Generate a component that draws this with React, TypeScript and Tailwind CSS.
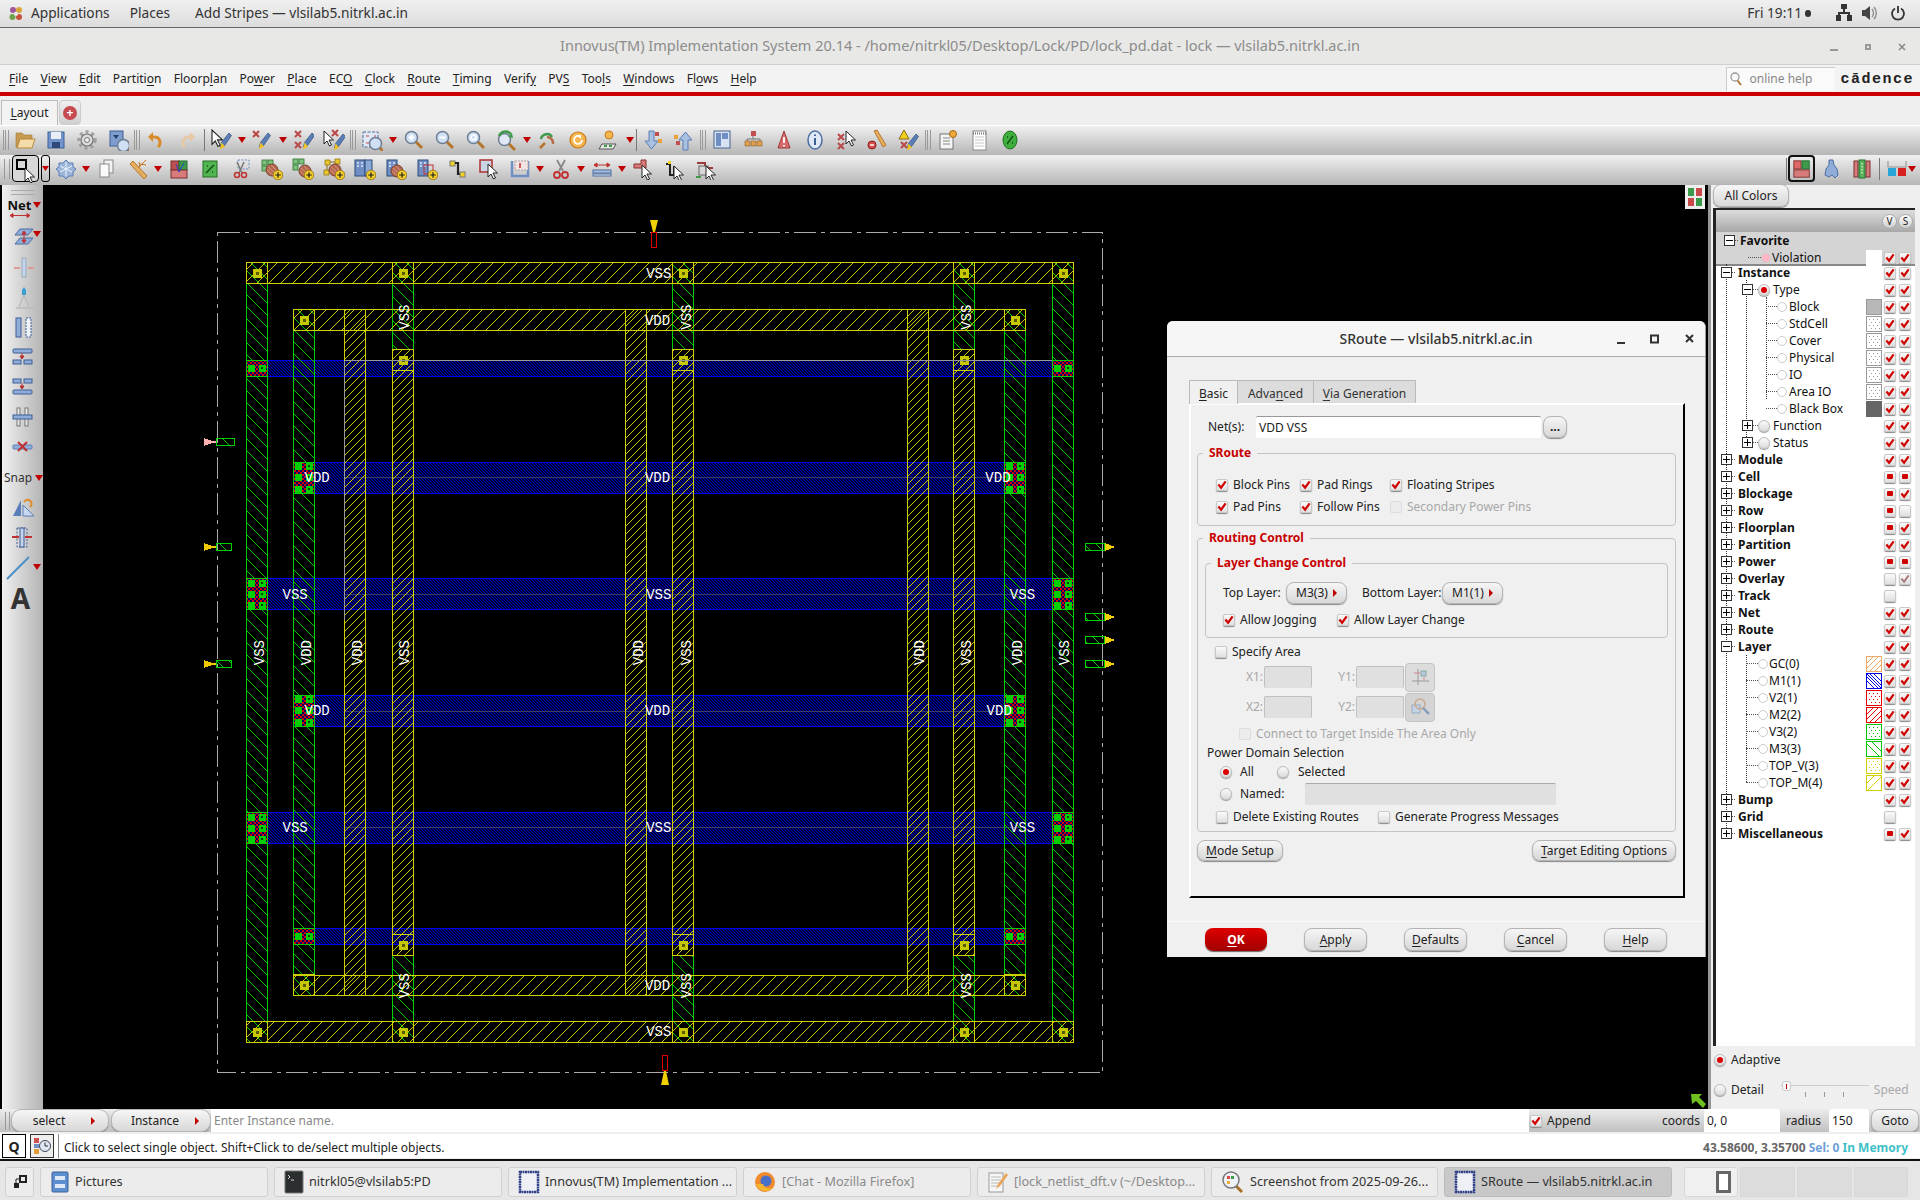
import React from "react";

// ---------- small icon parts ----------
const Cur = ({ x = 0, y = 0, s = 1 }: { x?: number; y?: number; s?: number }) => (
  <path transform={`translate(${x} ${y}) scale(${s})`} d="M0 0v13l3-3 2.5 5 2-1L5 9h4.5z" fill="#fff" stroke="#222" strokeWidth="1" />
);
const Pen = ({ x = 0, y = 0 }: { x?: number; y?: number }) => (
  <g transform={`translate(${x} ${y})`}>
    <path d="M11 0l2.5 2.5-7 10-4 1.5 1-4.500z" fill="#5a7fb8" stroke="#2f4a78" strokeWidth=".7" />
    <path d="M3.500 9.500l-1.500 7 5-3z" fill="#f0c21c" />
  </g>
);
const X = ({ x = 0, y = 0 }: { x?: number; y?: number }) => (
  <path transform={`translate(${x} ${y})`} d="M0 0l6 6M6 0L0 6" stroke="#b84a4a" strokeWidth="2" fill="none" />
);
const Mag = ({ x = 0, y = 0, c = "#cfe0f5" }: { x?: number; y?: number; c?: string }) => (
  <g transform={`translate(${x} ${y})`}>
    <path d="M10 10l7 7" stroke="#b5762c" strokeWidth="3" />
    <circle cx="6.500" cy="6.500" r="6" fill={c} stroke="#6d7d92" strokeWidth="1.500" />
  </g>
);
const Plus = ({ x = 0, y = 0 }: { x?: number; y?: number }) => (
  <g transform={`translate(${x} ${y})`}>
    <circle cx="5" cy="5" r="4.800" fill="#f4cf2c" stroke="#8a6a10" strokeWidth=".8" />
    <path d="M5 2.200v5.600M2.200 5h5.600" stroke="#222" strokeWidth="1.200" />
  </g>
);
const Grn = ({ x = 0, y = 0 }: { x?: number; y?: number }) => (
  <g transform={`translate(${x} ${y})`} fill="#7cc47c" stroke="#2f6f2f" strokeWidth=".8">
    <rect x="0" y="0" width="5" height="5" />
    <rect x="6" y="0" width="5" height="5" />
    <rect x="0" y="6" width="5" height="5" />
  </g>
);
const Blu = ({ x = 0, y = 0 }: { x?: number; y?: number }) => (
  <g transform={`translate(${x} ${y})`}>
    <rect width="10" height="16" fill="#6f8fc4" stroke="#2f4a78" />
    <path d="M2 3h2M6 3h2M2 6h2M6 6h2" stroke="#dfe8f6" strokeWidth="1.500" />
  </g>
);
const Ball = ({ x = 0, y = 0 }: { x?: number; y?: number }) => (
  <g transform={`translate(${x} ${y})`}>
    <circle cx="6" cy="6" r="6" fill="#b5684f" stroke="#7a3f2c" />
    <path d="M2 3l8 7M1 6l6 5M5 1l6 6" stroke="#e0a58f" strokeWidth=".8" />
  </g>
);

const ic: Record<string, React.ReactNode> = {
  folder: (
    <>
      <path d="M2 4h6l2 2h8v4H6l-3 8H2z" fill="#c79c52" stroke="#a37a35" strokeWidth=".6" />
      <path d="M6 10h15l-3 9H3z" fill="#f4dba8" stroke="#b98a3e" />
    </>
  ),
  save: (
    <>
      <rect x="3" y="3" width="16" height="16" fill="#7195cb" stroke="#3e5f95" />
      <rect x="6" y="3" width="10" height="7" fill="#e8eef6" />
      <rect x="7" y="13" width="8" height="6" fill="#2f4a78" />
    </>
  ),
  gear: (
    <>
      <circle cx="11" cy="11" r="8" fill="none" stroke="#a0a0a0" strokeWidth="3.500" strokeDasharray="3 3" />
      <circle cx="11" cy="11" r="6" fill="#dcdcdc" stroke="#777" strokeWidth="1.200" />
      <circle cx="11" cy="11" r="2.500" fill="#efefef" stroke="#777" />
    </>
  ),
  props: (
    <>
      <rect x="3" y="2" width="13" height="15" fill="#7f9dcd" stroke="#3e5f95" />
      <path d="M6 6l3 4 3-4z" fill="#24406f" />
      <Mag x={10} y={10} />
    </>
  ),
  undo: (
    <>
      <path d="M13 18c4-4 2-10-4-10H7" stroke="#d98c2e" strokeWidth="3" fill="none" />
      <path d="M8 3L3 8l5 5z" fill="#d98c2e" />
    </>
  ),
  redo: (
    <>
      <path d="M9 18c-4-4-2-10 4-10h2" stroke="#e6c7a6" strokeWidth="3" fill="none" />
      <path d="M14 3l5 5-5 5z" fill="#e6c7a6" />
    </>
  ),
  selpen: (
    <>
      <Cur x={2} y={1} s={1.100} />
      <Pen x={8} y={4} />
    </>
  ),
  xpen: (
    <>
      <X x={2} y={2} />
      <Pen x={6} y={4} />
    </>
  ),
  xxpen: (
    <>
      <X x={3} y={2} />
      <X x={3} y={13} />
      <Pen x={9} y={4} />
    </>
  ),
  curxpen: (
    <>
      <Cur x={1} y={2} />
      <X x={9} y={1} />
      <Pen x={9} y={5} />
    </>
  ),
  zoomsel: (
    <>
      <rect x="2" y="3" width="15" height="15" fill="#dfe8f4" stroke="#4d6d9e" strokeDasharray="3 1.500" />
      <path d="M5 7h3M13 7h2M5 14h3" stroke="#c05050" />
      <Mag x={8} y={8} />
    </>
  ),
  zin: (
    <>
      <Mag x={3} y={2} />
      <path d="M9.500 5.500v6M6.500 8.500h6" stroke="#fff" strokeWidth="2" />
    </>
  ),
  zout: (
    <>
      <Mag x={3} y={2} />
      <path d="M6.500 8.500h6" stroke="#fff" strokeWidth="2" />
    </>
  ),
  zfit: (
    <>
      <Mag x={3} y={2} />
      <circle cx="9.500" cy="8.500" r="2.500" fill="none" stroke="#fff" strokeWidth="1.500" />
    </>
  ),
  zback: (
    <>
      <Mag x={3} y={4} c="#dfe8f4" />
      <path d="M4 7c2-5 8-6 12-2" stroke="#3e9a4a" strokeWidth="2.500" fill="none" />
      <path d="M18 9l-5-1 4-4z" fill="#3e9a4a" />
    </>
  ),
  zfwd: (
    <>
      <path d="M5 10a6 6 0 0 1 11-2" stroke="#3e9a4a" strokeWidth="2.500" fill="none" />
      <path d="M11 8a6 6 0 0 1 6 7" stroke="#b56a4a" strokeWidth="2.500" fill="none" />
      <path d="M9 14l-5 5" stroke="#b5762c" strokeWidth="2.500" />
    </>
  ),
  refresh: (
    <>
      <circle cx="11" cy="11" r="8" fill="#f4b64e" stroke="#c9791c" strokeWidth="1.200" />
      <path d="M15 11a4 4 0 1 1-2-3.500" stroke="#fff" strokeWidth="1.800" fill="none" />
      <path d="M9 6h5v4z" fill="#fff" />
    </>
  ),
  chip: (
    <>
      <circle cx="11" cy="6" r="4" fill="#f4b64e" stroke="#c9791c" />
      <path d="M4 15h14l-3 5H1z" fill="#e8e8e8" stroke="#555" />
      <path d="M6 16h3v2H6zM11 16h3v2h-3z" fill="#3e9a4a" />
    </>
  ),
  down: (
    <>
      <path d="M7 2h5v10h4l-6.500 8L3 12h4z" fill="#a9c0e0" stroke="#5a7fb8" />
      <rect x="13" y="3" width="4" height="4" fill="#c05050" />
      <rect x="16" y="10" width="4" height="4" fill="#e9a03a" />
    </>
  ),
  up: (
    <>
      <path d="M10 21h5V11h4l-6.500-8L6 11h4z" fill="#a9c0e0" stroke="#5a7fb8" />
      <rect x="1" y="6" width="4" height="4" fill="#e9a03a" />
      <rect x="3" y="12" width="4" height="4" fill="#c05050" />
    </>
  ),
  layout: (
    <>
      <rect x="3" y="2" width="16" height="17" fill="#d8e2f2" stroke="#46648f" />
      <rect x="5" y="4" width="5" height="13" fill="#6f8fc4" />
      <rect x="11" y="4" width="6" height="6" fill="#6f8fc4" />
    </>
  ),
  hier: (
    <>
      <rect x="9" y="2" width="5" height="5" fill="#c05050" />
      <path d="M11 7v3M5 12v-2h13v2" stroke="#777" fill="none" />
      <path d="M3 12h5v5H3zM9 12h5v5H9zM15 12h5v5h-5z" fill="#e0a04e" stroke="#8a6030" strokeWidth=".6" />
    </>
  ),
  warn: (
    <>
      <path d="M11 2l6 17H5z" fill="#d96a6a" stroke="#a03a3a" />
      <path d="M11 8v6M11 16v1.500" stroke="#fff" strokeWidth="1.800" />
    </>
  ),
  info: (
    <>
      <ellipse cx="11" cy="11" rx="7" ry="9" fill="#dfe8f6" stroke="#4d6d9e" strokeWidth="1.500" />
      <path d="M11 9v7M11 5.500v1.500" stroke="#3e5f95" strokeWidth="2" />
    </>
  ),
  xcur: (
    <>
      <X x={3} y={5} />
      <X x={3} y={14} />
      <Cur x={11} y={2} />
    </>
  ),
  rstop: (
    <>
      <path d="M8 2l3-1 9 15-3 2z" fill="#e5ad5e" stroke="#b3772c" />
      <circle cx="6" cy="16" r="4" fill="#d64a4a" stroke="#8a2020" />
      <path d="M4 16h4" stroke="#fff" strokeWidth="1.500" />
    </>
  ),
  wpen: (
    <>
      <path d="M7 1l5 9H2z" fill="#f2d31c" stroke="#8a6a10" />
      <Pen x={8} y={5} />
      <X x={4} y={13} />
    </>
  ),
  notes: (
    <>
      <rect x="3" y="5" width="13" height="15" fill="#f4f4f4" stroke="#777" />
      <path d="M6 9h7M6 12h7M6 15h7" stroke="#888" />
      <circle cx="16" cy="5" r="3.500" fill="#f0a838" stroke="#a56a14" />
    </>
  ),
  pad: (
    <>
      <rect x="5" y="2" width="13" height="19" fill="#fdfdfd" stroke="#888" />
      <path d="M5 4.500h13" stroke="#777" strokeWidth="2" strokeDasharray="1 1" />
      <path d="M7 8h9M7 11h9M7 14h9M7 17h9" stroke="#c8c8c8" />
    </>
  ),
  gball: (
    <>
      <ellipse cx="11" cy="11" rx="7" ry="9" fill="#3fae3f" stroke="#1f6f1f" />
      <path d="M8 15l6-8M8 8h1M13 14h1" stroke="#0f4f0f" strokeWidth="1.300" />
    </>
  ),
  snow: (
    <>
      <path d="M11 2l3 3 4 0 0 4 3 2-3 3v4h-4l-3 3-3-3H4v-4l-3-3 3-2V5h4z" fill="#9bb6d8" stroke="#5a7fb8" />
      <path d="M11 4v14M5 8l12 6M17 8L5 14" stroke="#eef3fa" />
    </>
  ),
  copy: (
    <>
      <rect x="8" y="2" width="9" height="13" fill="#f2f2f2" stroke="#888" />
      <rect x="4" y="6" width="9" height="13" fill="#fafafa" stroke="#888" />
    </>
  ),
  ruler: (
    <>
      <path d="M3 6l3-3 14 15-3 3z" fill="#e5ad5e" stroke="#b3772c" />
      <path d="M11 10l8-8M13 6l6 1M12 4l1 5" stroke="#c9791c" />
    </>
  ),
  chart: (
    <>
      <rect x="3" y="3" width="8" height="9" fill="#c05050" stroke="#7a2f2f" />
      <rect x="11" y="3" width="8" height="9" fill="#3e9a4a" stroke="#1f6f2f" />
      <rect x="3" y="12" width="16" height="8" fill="#d67a7a" stroke="#7a2f2f" />
      <path d="M8 6l3 8 5-9" stroke="#2040d0" fill="none" />
    </>
  ),
  pct: (
    <>
      <rect x="4" y="3" width="14" height="16" fill="#52b552" stroke="#256f25" />
      <path d="M7 15l8-8M8 8h1M13 14h1" stroke="#0f4f0f" strokeWidth="1.500" />
    </>
  ),
  scis: (
    <>
      <rect x="8" y="2" width="11" height="9" fill="none" stroke="#6f8fc4" strokeDasharray="2 1.500" />
      <path d="M7 4l5 11M14 4l-5 11" stroke="#777" strokeWidth="1.500" />
      <circle cx="7" cy="17" r="2.500" fill="none" stroke="#c03030" strokeWidth="1.500" />
      <circle cx="14" cy="17" r="2.500" fill="none" stroke="#c03030" strokeWidth="1.500" />
    </>
  ),
  gridball: (
    <>
      <Grn x={1} y={2} />
      <Ball x={5} y={6} />
      <Plus x={12} y={12} />
    </>
  ),
  gridball2: (
    <>
      <Grn x={1} y={1} />
      <Ball x={7} y={7} />
      <Plus x={12} y={12} />
    </>
  ),
  yellball: (
    <>
      <path d="M2 2h5v5H2zM12 1h5v5h-5zM1 12h5v5H1z" fill="#e8c82c" stroke="#8a6a10" strokeWidth=".7" />
      <path d="M7 4h5M4 7v5" stroke="#8a6a10" />
      <Ball x={6} y={6} />
      <Plus x={12} y={12} />
    </>
  ),
  bluebar: (
    <>
      <Blu x={1} y={2} />
      <rect x="11" y="2" width="7" height="16" fill="#8ba9d6" stroke="#2f4a78" />
      <Plus x={12} y={12} />
    </>
  ),
  blueball: (
    <>
      <Blu x={2} y={2} />
      <Ball x={6} y={7} />
      <Plus x={12} y={12} />
    </>
  ),
  bluered: (
    <>
      <Blu x={2} y={2} />
      <rect x="8" y="7" width="9" height="9" fill="none" stroke="#c03030" />
      <Plus x={12} y={12} />
    </>
  ),
  wire: (
    <>
      <rect x="3" y="3" width="5" height="5" fill="#f0d020" stroke="#777" />
      <path d="M8 5h3v11h3" stroke="#222" strokeWidth="2.200" fill="none" />
      <rect x="13" y="14" width="5" height="5" fill="#f0d020" stroke="#777" />
    </>
  ),
  boxcur: (
    <>
      <rect x="2" y="2" width="12" height="12" fill="#c9d4e6" stroke="#b03030" strokeWidth="1.500" />
      <Cur x={10} y={6} />
    </>
  ),
  tray: (
    <>
      <path d="M3 3v15h16V3" fill="none" stroke="#6f8fc4" strokeWidth="2.500" />
      <path d="M6 3h13v9H6z" fill="#f3e4e4" stroke="#b0a0a0" strokeDasharray="2 1" />
      <path d="M11 5v5" stroke="#c03030" strokeWidth="1.500" />
    </>
  ),
  scissor: (
    <>
      <path d="M7 2l6 11M15 2L9 13" stroke="#888" strokeWidth="1.800" />
      <circle cx="7" cy="17" r="3" fill="none" stroke="#c03030" strokeWidth="1.800" />
      <circle cx="15" cy="17" r="3" fill="none" stroke="#c03030" strokeWidth="1.800" />
    </>
  ),
  stretch: (
    <>
      <path d="M3 7h16M3 7l3-2v4zM19 7l-3-2v4z" stroke="#c03030" fill="#c03030" />
      <rect x="2" y="12" width="18" height="3" fill="#a9c0e0" stroke="#4d6d9e" />
      <rect x="2" y="16" width="18" height="2" fill="#dfe8f4" stroke="#4d6d9e" />
    </>
  ),
  redcur: (
    <>
      <path d="M9 2h5v8H2V6h7z" fill="#d97a7a" stroke="#8a3030" />
      <Cur x={10} y={7} />
    </>
  ),
  step: (
    <>
      <path d="M3 6h4v11h4V8" stroke="#222" strokeWidth="2" fill="none" />
      <rect x="5" y="3" width="3" height="3" fill="#f0d020" />
      <Cur x={11} y={8} />
    </>
  ),
  redstep: (
    <>
      <path d="M3 5h8v5h8" stroke="#9a3a3a" strokeWidth="2" fill="none" />
      <rect x="5" y="8" width="9" height="9" fill="#d8d8d8" stroke="#666" />
      <Cur x={12} y={8} />
      <path d="M2 19h5" stroke="#3e9a4a" strokeWidth="2" />
    </>
  ),
  panelc: (
    <>
      <rect x="2" y="2" width="8" height="9" fill="#d66" stroke="#7a2f2f" />
      <rect x="11" y="2" width="8" height="9" fill="#3e9a4a" stroke="#1f6f2f" />
      <rect x="2" y="12" width="17" height="8" fill="#d67a7a" stroke="#7a2f2f" />
    </>
  ),
  puzzle: <path d="M9 2h4l1 5 3 4 1 6-3 3-3-3-3 2-4-2 1-6 3-4z" fill="#8fadd8" stroke="#4d6d9e" />,
  greenbar: (
    <>
      <rect x="3" y="3" width="4" height="16" fill="#d67a7a" stroke="#7a2f2f" />
      <rect x="8" y="2" width="6" height="18" fill="#5ab55a" stroke="#1f6f2f" />
      <path d="M11 5v12" stroke="#fff" strokeDasharray="1.500 1.500" />
      <rect x="15" y="3" width="4" height="16" fill="#d67a7a" stroke="#7a2f2f" />
    </>
  ),
  bridge: (
    <>
      <path d="M2 3v6h18V3" fill="none" stroke="#aaa" strokeWidth="1.500" />
      <rect x="2" y="10" width="8" height="8" fill="#27a5d8" />
      <rect x="12" y="10" width="8" height="8" fill="#d62020" />
    </>
  ),
};

const Ico = ({ n, s = 22 }: { n: string; s?: number }) => (
  <svg width={s} height={s} viewBox="0 0 22 22">
    {ic[n]}
  </svg>
);

const Tri = () => (
  <svg width="10" height="6" viewBox="0 0 10 6" className="shrink-0">
    <path d="M1 0h8L5 6z" fill="#c00000" />
  </svg>
);

const T = ({ n }: { n: string }) => (
  <div className="w-[31px] flex items-center justify-center shrink-0">
    <Ico n={n} />
  </div>
);

const Handle = () => (
  <div className="w-[6px] h-[20px] mr-[1px] shrink-0 border-x border-[#999] relative">
    <div className="w-[1px] h-full bg-[#999] mx-auto" />
  </div>
);

const Sp = ({ w }: { w: number }) => <div className="shrink-0" style={{ width: w }} />;
const VSep = () => <div className="w-[1px] h-[22px] bg-[#777] shrink-0 mx-[1px]" />;

// ---------- menu ----------
const M = ({ t, u = 0, className = "" }: { t: string; u?: number; className?: string }) => (
  <span className={className}>
    {t.slice(0, u)}
    <span className="underline underline-offset-2">{t[u]}</span>
    {t.slice(u + 1)}
  </span>
);

const menus: [string, number][] = [
  ["File", 0],
  ["View", 0],
  ["Edit", 0],
  ["Partition", 7],
  ["Floorplan", 6],
  ["Power", 2],
  ["Place", 0],
  ["ECO", 2],
  ["Clock", 0],
  ["Route", 0],
  ["Timing", 0],
  ["Verify", 5],
  ["PVS", 2],
  ["Tools", 3],
  ["Windows", 0],
  ["Flows", 2],
  ["Help", 0],
];

// ---------- form bits ----------
const Chk = ({ st = "o" }: { st?: string }) => {
  const dis = st === "n";
  return (
    <span
      className={`inline-flex w-[12px] h-[12px] shrink-0 items-center justify-center rounded-[2px] border ${
        dis ? "border-[#ddd] bg-[#ececec]" : "border-[#c8c8c8] bg-linear-to-b from-[#fafafa] to-[#e0e0e0] shadow-[0_1px_1px_#888]"
      }`}
    >
      {st === "x" && (
        <svg width="11" height="10" viewBox="0 0 11 10">
          <path d="M1.500 4.500l3 3.500 5-7" stroke="#d00000" strokeWidth="2.400" fill="none" />
        </svg>
      )}
      {st === "g" && (
        <svg width="11" height="10" viewBox="0 0 11 10">
          <path d="M1.500 4.500l3 3.500 5-7" stroke="#a87878" strokeWidth="2" fill="none" />
        </svg>
      )}
      {st === "d" && <span className="w-[6px] h-[5px] bg-[#d00000] rounded-[1px]" />}
    </span>
  );
};

const Radio = ({ on = false, s = 12 }: { on?: boolean; s?: number }) => (
  <span
    className="inline-flex shrink-0 items-center justify-center rounded-full border border-[#bbb] bg-linear-to-b from-[#fafafa] to-[#dcdcdc] shadow-[0_1px_1px_#999]"
    style={{ width: s, height: s }}
  >
    {on && <span className="w-[6px] h-[6px] rounded-full bg-[#d80000]" />}
  </span>
);

const CL = ({ st, t, w, dim }: { st: string; t: string; w?: number; dim?: boolean }) => (
  <div className="flex items-center gap-[5px] shrink-0" style={w ? { width: w } : undefined}>
    <Chk st={st} />
    <span className={dim ? "text-[#a8a8a8]" : ""}>{t}</span>
  </div>
);

const btn = "flex items-center justify-center rounded-[8px] border border-[#b4b4b4] bg-linear-to-b from-[#f6f6f6] to-[#d8d8d8] shadow-[0_1px_1px_#888] shrink-0";

const Group = ({ t, className, children }: { t: string; className: string; children: React.ReactNode }) => (
  <div className={`relative border border-[#c4c4c4] rounded-[4px] ${className}`}>
    <span className="absolute -top-[10px] left-[5px] px-[6px] bg-[#f0f0f0] text-[#c80000] font-bold leading-[18px]">{t}</span>
    {children}
  </div>
);

const AreaField = () => <div className="w-[48px] h-[22px] bg-[#e0e0e0] border-t border-x border-[#c0c0c0] border-b-white rounded-[2px]" />;

// ---------- design tree ----------
type R = { t: string; k: string; e?: string; on?: boolean; sw?: React.ReactNode; v?: string; s?: string };

const Sw = ({ c, d, bg = "#fff", crisp }: { c: string; d: string; bg?: string; crisp?: boolean }) => (
  <svg width="16" height="16" viewBox="0 0 16 16" className="block">
    <rect x=".5" y=".5" width="15" height="15" fill={bg} stroke={c} />
    <path d={d} stroke={c} fill="none" shapeRendering={crisp ? "crispEdges" : undefined} />
  </svg>
);
const dots = "M3 3.500h1M7 3.500h1M11 3.500h1M5 6.500h1M9 6.500h1M13 6.500h1M3 9.500h1M7 9.500h1M11 9.500h1M5 12.500h1M9 12.500h1M13 12.500h1";
const fwd = "M1 7l6-6M1 12l11-11M4 15L15 4M9 15l6-6";
const back = "M1 4l11 11M1 1l14 14M4 1l11 11M8 1l7 7M1 8l7 7";
const one = "M1 3l12 12M6 1l9 9";
const oneF = "M2 15L15 2M1 8l7-7";
const gd = <Sw c="#999" d={dots} crisp />;

const rows: R[] = [
  { t: "Favorite", k: "fav", e: "-" },
  { t: "Violation", k: "vio", sw: <div className="w-[16px] h-[16px] bg-white" />, v: "x", s: "x" },
  { t: "Instance", k: "root", e: "-", v: "x", s: "x" },
  { t: "Type", k: "sub", e: "-", on: true, v: "x", s: "x" },
  { t: "Block", k: "leaf", sw: <Sw c="#999" bg="#b8b8b8" d="" />, v: "x", s: "x" },
  { t: "StdCell", k: "leaf", sw: gd, v: "x", s: "x" },
  { t: "Cover", k: "leaf", sw: gd, v: "x", s: "x" },
  { t: "Physical", k: "leaf", sw: gd, v: "x", s: "x" },
  { t: "IO", k: "leaf", sw: gd, v: "x", s: "x" },
  { t: "Area IO", k: "leaf", sw: gd, v: "x", s: "x" },
  { t: "Black Box", k: "leaf", sw: <div className="w-[16px] h-[16px] bg-[#666]" />, v: "x", s: "x" },
  { t: "Function", k: "sub", e: "+", v: "x", s: "x" },
  { t: "Status", k: "sub", e: "+", v: "x", s: "x" },
  { t: "Module", k: "root", e: "+", v: "x", s: "x" },
  { t: "Cell", k: "root", e: "+", v: "d", s: "d" },
  { t: "Blockage", k: "root", e: "+", v: "d", s: "x" },
  { t: "Row", k: "root", e: "+", v: "d", s: "o" },
  { t: "Floorplan", k: "root", e: "+", v: "d", s: "x" },
  { t: "Partition", k: "root", e: "+", v: "x", s: "x" },
  { t: "Power", k: "root", e: "+", v: "d", s: "d" },
  { t: "Overlay", k: "root", e: "+", v: "o", s: "g" },
  { t: "Track", k: "root", e: "+", v: "o" },
  { t: "Net", k: "root", e: "+", v: "x", s: "x" },
  { t: "Route", k: "root", e: "+", v: "x", s: "x" },
  { t: "Layer", k: "root", e: "-", v: "x", s: "x" },
  { t: "GC(0)", k: "layer", sw: <Sw c="#f0a868" d={fwd} />, v: "x", s: "x" },
  { t: "M1(1)", k: "layer", sw: <Sw c="#0000e0" d={back} />, v: "x", s: "x" },
  { t: "V2(1)", k: "layer", sw: <Sw c="#e80000" d={dots} crisp />, v: "x", s: "x" },
  { t: "M2(2)", k: "layer", sw: <Sw c="#e80000" d={fwd} />, v: "x", s: "x" },
  { t: "V3(2)", k: "layer", sw: <Sw c="#00c800" d={dots} crisp />, v: "x", s: "x" },
  { t: "M3(3)", k: "layer", sw: <Sw c="#00c800" d={one} />, v: "x", s: "x" },
  { t: "TOP_V(3)", k: "layer", sw: <Sw c="#d0d000" d={dots} crisp />, v: "x", s: "x" },
  { t: "TOP_M(4)", k: "layer", sw: <Sw c="#d0d000" d={oneF} />, v: "x", s: "x" },
  { t: "Bump", k: "root", e: "+", v: "x", s: "x" },
  { t: "Grid", k: "root", e: "+", v: "o" },
  { t: "Miscellaneous", k: "root", e: "+", v: "d", s: "x" },
];

const Exp = ({ e }: { e: string }) => (
  <span className="relative w-[11px] h-[11px] shrink-0 border border-[#333] bg-white">
    <span className="absolute left-[1px] right-[1px] top-[4px] h-[1px] bg-black" />
    {e === "+" && <span className="absolute top-[1px] bottom-[1px] left-[4px] w-[1px] bg-black" />}
  </span>
);
const HL = ({ w }: { w: number }) => <span className="border-t border-dotted border-[#555] shrink-0" style={{ width: w }} />;
const Faint = ({ c = "#fff" }: { c?: string }) => (
  <span className="w-[10px] h-[10px] rounded-full border border-[#ccc] shrink-0" style={{ background: c }} />
);

const TreeRow = ({ r }: { r: R }) => (
  <div className={`flex items-center h-[17px] pr-[2px] text-[#111] ${r.k === "root" ? "font-bold" : ""}`}>
    {r.k === "root" && (
      <div className="flex items-center pl-[5px]">
        <Exp e={r.e!} />
        <HL w={3} />
        <span className="ml-[3px]">{r.t}</span>
      </div>
    )}
    {r.k === "fav" && (
      <div className="flex items-center pl-[8px] font-bold">
        <Exp e={r.e!} />
        <HL w={3} />
        <span className="ml-[2px]">{r.t}</span>
      </div>
    )}
    {r.k === "vio" && (
      <div className="flex items-center pl-[32px]">
        <HL w={13} />
        <Faint c="#ffb6c6" />
        <span className="ml-[1px]">{r.t}</span>
      </div>
    )}
    {r.k === "sub" && (
      <div className="flex items-center pl-[26px]">
        <Exp e={r.e!} />
        <HL w={5} />
        <Radio on={r.on} />
        <span className="ml-[3px]">{r.t}</span>
      </div>
    )}
    {r.k === "leaf" && (
      <div className="flex items-center pl-[50px]">
        <HL w={11} />
        <Faint />
        <span className="ml-[2px]">{r.t}</span>
      </div>
    )}
    {r.k === "layer" && (
      <div className="flex items-center pl-[30px]">
        <HL w={12} />
        <Faint />
        <span className="ml-[1px]">{r.t}</span>
      </div>
    )}
    <div className="ml-auto flex items-center">
      <div className="w-[16px] h-[16px]">{r.sw}</div>
      <div className="w-[15px] flex justify-center">{r.v && <Chk st={r.v} />}</div>
      <div className="w-[16px] flex justify-center">{r.s && <Chk st={r.s} />}</div>
    </div>
  </div>
);

// ---------- layout drawing ----------
const k = 1.2245;
const Lab = ({ x, y, t, rot }: { x: number; y: number; t: string; rot?: boolean }) => (
  <text
    x={x * k}
    y={y * k}
    fill="#fff"
    fontFamily="'Liberation Mono', monospace"
    fontSize="14"
    textAnchor="middle"
    dominantBaseline="central"
    transform={rot ? `rotate(-90 ${x * k} ${y * k})` : undefined}
  >
    {t}
  </text>
);

const Bar = ({ x, y, w, h, p, c }: { x: number; y: number; w: number; h: number; p: string; c: string }) => (
  <rect x={x + 0.5} y={y + 0.5} width={w} height={h} fill={`url(#${p})`} stroke={c} shapeRendering="crispEdges" />
);

const YV = ({ x, y }: { x: number; y: number }) => (
  <g shapeRendering="crispEdges">
    <rect x={x + 0.5} y={y + 0.5} width="21" height="21" fill="none" stroke="#d0d000" />
    <rect x={x + 7} y={y + 7} width="9" height="9" fill="#c8c800" />
    <rect x={x + 10} y={y + 10} width="3" height="3" fill="#5a5a00" />
  </g>
);

const RV = ({ x, y, h, ys }: { x: number; y: number; h: number; ys: number[] }) => (
  <g shapeRendering="crispEdges">
    <rect x={x + 0.5} y={y + 0.5} width="21" height={h} fill="url(#red)" stroke="#00d000" />
    {ys.map((yy) => (
      <g key={yy}>
        <rect x={x + 2} y={yy - 3} width="7" height="7" fill="#00d000" />
        <rect x={x + 13} y={yy - 3} width="7" height="7" fill="#00d000" />
        <rect x={x + 15} y={yy - 1} width="2" height="2" fill="#004000" />
      </g>
    ))}
  </g>
);

const PinL = ({ y, w, c }: { y: number; w: number; c: string }) => (
  <g shapeRendering="crispEdges">
    <path d={`M204 ${y - 4}v8l8-3h5v-2h-5z`} fill={c} />
    <rect x="216.500" y={y - 3.500} width={w} height="7" fill="url(#grn)" stroke="#00d000" />
  </g>
);
const PinR = ({ y }: { y: number }) => (
  <g shapeRendering="crispEdges">
    <rect x="1085.500" y={y - 3.500} width="19" height="7" fill="url(#grn)" stroke="#00d000" />
    <path d={`M1115 ${y}l-10-4v8z`} fill="#f0d000" />
  </g>
);

const Layout = () => {
  const vss = [246, 1052];
  const mid = [392, 672, 953];
  const blue: [number, number, boolean][] = [
    [360, 16, true],
    [462, 31, false],
    [578, 31, true],
    [695, 31, false],
    [812, 31, true],
    [928, 16, false],
  ];
  return (
    <svg className="absolute inset-0" width="1665" height="924" viewBox="43 185 1665 924">
      <defs>
        <pattern id="grn" width="12" height="12" patternUnits="userSpaceOnUse">
          <path d="M0 0L12 12" stroke="#00c800" strokeWidth="1" />
        </pattern>
        <pattern id="yel" width="8" height="8" patternUnits="userSpaceOnUse">
          <path d="M0 8L8 0" stroke="#c8c800" strokeWidth="1" />
        </pattern>
        <pattern id="yel2" width="12" height="12" patternUnits="userSpaceOnUse">
          <path d="M0 12L12 0" stroke="#c8c800" strokeWidth="1" />
        </pattern>
        <pattern id="blu" width="3" height="3" patternUnits="userSpaceOnUse">
          <rect width="3" height="3" fill="#000030" />
          <path d="M0 0L3 3" stroke="#0000c8" strokeWidth="1" />
        </pattern>
        <pattern id="red" width="4" height="4" patternUnits="userSpaceOnUse">
          <rect width="4" height="4" fill="#000060" />
          <rect width="2" height="2" fill="#d00000" />
          <rect x="2" y="2" width="2" height="2" fill="#d00000" />
        </pattern>
      </defs>
      <rect x="217.500" y="232.500" width="885" height="840" fill="none" stroke="#aaa" strokeDasharray="22 5 4 5" shapeRendering="crispEdges" />
      {blue.map(([y, h, isV]) => (
        <Bar key={y} x={isV ? 246 : 293} y={y} w={isV ? 827 : 732} h={h} p="blu" c="#0000f0" />
      ))}
      {[477, 594, 711, 827].map((y) => (
        <path key={y} d={`M344 ${y}H1025`} stroke="#666" strokeOpacity=".6" shapeRendering="crispEdges" />
      ))}
      {vss.map((x) => (
        <Bar key={x} x={x} y={262} w={21} h={780} p="grn" c="#00d000" />
      ))}
      {[293, 1004].map((x) => (
        <Bar key={x} x={x} y={309} w={21} h={686} p="grn" c="#00d000" />
      ))}
      {[344, 625, 907].map((x) => (
        <Bar key={x} x={x} y={309} w={21} h={686} p="yel" c="#d0d000" />
      ))}
      {mid.map((x) => (
        <g key={x}>
          <Bar x={x} y={262} w={21} h={87} p="grn" c="#00d000" />
          <Bar x={x} y={955} w={21} h={87} p="grn" c="#00d000" />
          <Bar x={x} y={349} w={21} h={606} p="yel" c="#d0d000" />
          <YV x={x} y={349} />
          <YV x={x} y={934} />
        </g>
      ))}
      <Bar x={246} y={262} w={827} h={21} p="yel2" c="#d0d000" />
      <Bar x={246} y={1021} w={827} h={21} p="yel2" c="#d0d000" />
      <Bar x={293} y={309} w={732} h={21} p="yel2" c="#d0d000" />
      <Bar x={293} y={975} w={732} h={20} p="yel2" c="#d0d000" />
      <path d="M344.500 360.500V620M344.500 360.500H1073" stroke="#999" fill="none" shapeRendering="crispEdges" />
      {[246, 392, 672, 953, 1052].map((x) => (
        <g key={x}>
          <YV x={x} y={262} />
          <YV x={x} y={1021} />
        </g>
      ))}
      {[293, 1004].map((x) => (
        <g key={x}>
          <YV x={x} y={309} />
          <YV x={x} y={974} />
          <RV x={x} y={462} h={31} ys={[466, 477, 489]} />
          <RV x={x} y={695} h={31} ys={[699, 710, 722]} />
          <RV x={x} y={928} h={16} ys={[936]} />
        </g>
      ))}
      {vss.map((x) => (
        <g key={x}>
          <RV x={x} y={360} h={16} ys={[368]} />
          <RV x={x} y={578} h={31} ys={[583, 594, 605]} />
          <RV x={x} y={812} h={31} ys={[817, 828, 839]} />
        </g>
      ))}
      <PinL y={442} w={18} c="#ffb0b0" />
      <PinL y={547} w={15} c="#f0c800" />
      <PinL y={664} w={15} c="#f0c800" />
      <PinR y={547} />
      <PinR y={617} />
      <PinR y={640} />
      <PinR y={664} />
      <path d="M650 220h8l-3 12h-2z" fill="#f0d000" />
      <rect x="651.500" y="232.500" width="5" height="15" fill="none" stroke="#e00000" shapeRendering="crispEdges" />
      <rect x="662.500" y="1055.500" width="5" height="15" fill="none" stroke="#e00000" shapeRendering="crispEdges" />
      <path d="M661 1085h8l-3-14h-2z" fill="#f0d000" />
      {[
        [538, 224, "VSS"],
        [537, 262, "VDD"],
        [259, 390, "VDD"],
        [537, 390, "VDD"],
        [815, 390, "VDD"],
        [241, 486, "VSS"],
        [538, 486, "VSS"],
        [835, 486, "VSS"],
        [259, 581, "VDD"],
        [537, 581, "VDD"],
        [816, 581, "VDD"],
        [241, 676, "VSS"],
        [538, 676, "VSS"],
        [835, 676, "VSS"],
        [537, 805, "VDD"],
        [538, 843, "VSS"],
      ].map(([x, y, t]) => (
        <Lab key={`${x}-${y}`} x={x as number} y={y as number} t={t as string} />
      ))}
      {[
        [212, 533, "VSS"],
        [251, 533, "VDD"],
        [292, 533, "VDD"],
        [331, 533, "VSS"],
        [522, 533, "VDD"],
        [561, 533, "VSS"],
        [751, 533, "VDD"],
        [790, 533, "VSS"],
        [831, 533, "VDD"],
        [870, 533, "VSS"],
        [331, 259, "VSS"],
        [561, 259, "VSS"],
        [790, 259, "VSS"],
        [331, 805, "VSS"],
        [561, 805, "VSS"],
        [790, 805, "VSS"],
      ].map(([x, y, t]) => (
        <Lab key={`${x}-${y}`} x={x as number} y={y as number} t={t as string} rot />
      ))}
      <path d="M1691 1094h11l-3 3 7 7-3 4-7-7-4 3z" fill="#70c020" />
    </svg>
  );
};

// ---------- left tool strip ----------
const leftIcons: React.ReactNode[] = [
  <>
    <path d="M4 9l5-6h13l-5 6zM4 18l5-6h13l-5 6z" fill="#8fadd8" stroke="#4d6d9e" />
    <path d="M13 6v10M13 5l-2 3h4zM13 17l-2-3h4z" stroke="#c03030" fill="#c03030" />
  </>,
  <>
    <rect x="11" y="2" width="4" height="19" fill="#c4d4ec" stroke="#9ab" />
    <path d="M3 12h6M23 12h-6" stroke="#dd9a9a" strokeWidth="2" />
  </>,
  <>
    <path d="M13 1l2 3v5h-4V4z" fill="#3b9fd0" />
    <path d="M13 9L8 21M13 9l5 12M5 22h18" stroke="#bbb" strokeWidth="1.500" fill="none" />
  </>,
  <>
    <rect x="5" y="2" width="5" height="19" fill="#8fadd8" stroke="#3e5f95" />
    <rect x="15" y="2" width="5" height="19" fill="#eef2f8" stroke="#3e5f95" strokeDasharray="2 1" />
  </>,
  <>
    <rect x="2" y="3" width="19" height="4" rx="1" fill="#8fadd8" stroke="#3e5f95" />
    <path d="M11 7v5M9 10l2 3 2-3z" stroke="#b03030" fill="#b03030" />
    <rect x="2" y="14" width="8" height="4" fill="#8fadd8" stroke="#3e5f95" />
    <rect x="13" y="14" width="8" height="4" fill="#8fadd8" stroke="#3e5f95" />
  </>,
  <>
    <rect x="2" y="3" width="8" height="4" fill="#8fadd8" stroke="#3e5f95" />
    <rect x="13" y="3" width="8" height="4" fill="#8fadd8" stroke="#3e5f95" />
    <path d="M11 7v5M9 10l2 3 2-3z" stroke="#b03030" fill="#b03030" />
    <rect x="2" y="14" width="19" height="4" rx="1" fill="#8fadd8" stroke="#3e5f95" />
  </>,
  <>
    <rect x="6" y="2" width="3" height="18" fill="#e8e8e8" stroke="#777" />
    <rect x="14" y="2" width="3" height="18" fill="#e8e8e8" stroke="#777" />
    <rect x="2" y="9" width="19" height="4" fill="#8fadd8" stroke="#3e5f95" />
  </>,
  <>
    <rect x="2" y="9" width="19" height="4" rx="1" fill="#8fadd8" stroke="#5a7fb8" />
    <path d="M7 6l9 9M16 6l-9 9" stroke="#c03030" strokeWidth="2" />
  </>,
];
const leftIcons2: React.ReactNode[] = [
  <>
    <path d="M10 4v16H2z" fill="#5a7fb8" />
    <path d="M12 9v11h11z" fill="#c8d8ec" stroke="#5a7fb8" />
    <path d="M13 6a4 4 0 1 1 6 5" stroke="#e08a2a" strokeWidth="2" fill="none" />
  </>,
  <>
    <rect x="6" y="2" width="10" height="19" fill="none" stroke="#3e5f95" strokeDasharray="2 1.500" />
    <rect x="9" y="2" width="4" height="19" fill="#c4d4ec" stroke="#3e5f95" />
    <path d="M1 11h7M21 11h-7" stroke="#c03030" strokeWidth="2" />
  </>,
];

const Left = () => (
  <div className="w-[41px] ml-[2px] shrink-0 bg-linear-to-r from-[#f0f0f0] to-[#b4b4b4] flex flex-col items-center">
    <div className="w-[24px] h-[5px] mt-[5px] border-y border-[#aaa]" />
    <div className="h-[26px] mt-[2px] w-full relative flex flex-col items-center pr-[6px]">
      <span className="font-bold text-[13px] leading-[15px] text-[#111] mt-[1px]">Net</span>
      <svg width="22" height="5" viewBox="0 0 22 5">
        <path d="M1 2.500h20M1 2.500l3-2v4zM21 2.500l-3-2v4z" stroke="#c03030" fill="#c03030" />
      </svg>
      <div className="absolute right-[1px] top-[5px]">
        <Tri />
      </div>
    </div>
    {leftIcons.map((n, i) => (
      <div key={i} className="h-[30px] w-full flex items-center justify-center relative">
        <svg width="24" height="24" viewBox="0 0 24 24">
          {n}
        </svg>
        {i === 0 && (
          <div className="absolute right-[1px] top-[8px]">
            <Tri />
          </div>
        )}
      </div>
    ))}
    <div className="h-[30px] w-full flex items-center pl-[2px] gap-[2px] text-[12px] text-[#333]">
      Snap
      <Tri />
    </div>
    {leftIcons2.map((n, i) => (
      <div key={i} className="h-[30px] w-full flex items-center justify-center">
        <svg width="24" height="24" viewBox="0 0 24 24">
          {n}
        </svg>
      </div>
    ))}
    <div className="h-[30px] w-full flex items-center relative">
      <svg width="28" height="24" viewBox="0 0 28 24" className="ml-[3px]">
        <path d="M2 23L24 1" stroke="#4a90c8" strokeWidth="2" />
      </svg>
      <div className="absolute right-[1px] top-[11px]">
        <Tri />
      </div>
    </div>
    <div className="h-[30px] flex items-center justify-center font-bold text-[28px] text-[#333] leading-none pr-[4px]">A</div>
  </div>
);

// ---------- dialog ----------
const Dialog = () => (
  <div className="absolute left-[1167px] top-[136px] w-[539px] h-[636px] flex flex-col bg-[#f0f0f0] rounded-t-[6px] text-[12px] text-[#222] border-r border-[#999]">
    <div className="h-[36px] shrink-0 bg-[#f6f6f6] rounded-t-[6px] border-b border-[#aaa] flex items-center relative justify-center">
      <span className="text-[14px] font-medium text-[#333]">SRoute — vlsilab5.nitrkl.ac.in</span>
      <svg className="absolute right-[4px] top-[12px]" width="88" height="12" viewBox="0 0 88 12">
        <path d="M4 10h8" stroke="#333" strokeWidth="2" />
        <rect x="38" y="2.500" width="7" height="7" fill="none" stroke="#333" strokeWidth="2" />
        <path d="M73 2l7 7M80 2l-7 7" stroke="#333" strokeWidth="2" />
      </svg>
    </div>
    <div className="flex-1 pl-[22px] pt-[23px]">
      <div className="flex h-[23px] text-[12px]">
        <div className="w-[49px] h-[24px] pt-[2px] bg-[#f0f0f0] border-t border-l border-r border-[#bbb] flex items-center justify-center relative z-10">
          <M t="Basic" />
        </div>
        <div className="w-[76px] pt-[3px] bg-[#dcdcdc] border-t border-r border-[#bbb] flex items-center justify-center text-[#333]">
          <M t="Advanced" u={4} />
        </div>
        <div className="w-[102px] pt-[3px] bg-[#dcdcdc] border-t border-r border-[#bbb] flex items-center justify-center text-[#333]">
          <M t="Via Generation" />
        </div>
      </div>
      <div className="w-[496px] h-[495px] border-2 border-t-white border-l-white border-r-black border-b-black">
        <div className="flex items-center h-[22px] mt-[11px] ml-[17px]">
          <span className="w-[48px]">Net(s):</span>
          <div className="w-[285px] h-[22px] bg-white border-t border-[#999] rounded-[2px] flex items-center pl-[3px] text-[12px]">VDD VSS</div>
          <div className={`${btn} w-[24px] h-[22px] ml-[2px] font-bold`}>...</div>
        </div>
        <Group t="SRoute" className="ml-[6px] mt-[15px] w-[479px] h-[73px] pl-[18px] pt-[20px]">
          <div className="flex h-[22px] items-center">
            <CL st="x" t="Block Pins" w={84} />
            <CL st="x" t="Pad Rings" w={90} />
            <CL st="x" t="Floating Stripes" />
          </div>
          <div className="flex h-[22px] items-center">
            <CL st="x" t="Pad Pins" w={84} />
            <CL st="x" t="Follow Pins" w={90} />
            <CL st="n" t="Secondary Power Pins" dim />
          </div>
        </Group>
        <Group t="Routing Control" className="ml-[6px] mt-[12px] w-[479px] h-[294px]">
          <Group t="Layer Change Control" className="ml-[7px] mt-[24px] w-[463px] h-[75px] pl-[17px] pt-[18px]">
            <div className="flex items-center h-[22px]">
              <span className="w-[63px]">Top Layer:</span>
              <div className={`${btn} w-[61px] h-[22px] gap-[5px]`}>
                M3(3)
                <span className="w-0 h-0 border-y-[4px] border-y-transparent border-l-[4px] border-l-[#c00000]" />
              </div>
              <span className="w-[80px] ml-[15px]">Bottom Layer:</span>
              <div className={`${btn} w-[61px] h-[22px] gap-[5px]`}>
                M1(1)
                <span className="w-0 h-0 border-y-[4px] border-y-transparent border-l-[4px] border-l-[#c00000]" />
              </div>
            </div>
            <div className="flex items-center h-[20px] mt-[6px]">
              <CL st="x" t="Allow Jogging" w={114} />
              <CL st="x" t="Allow Layer Change" />
            </div>
          </Group>
          <div className="flex items-center h-[18px] mt-[5px] pl-[17px]">
            <CL st="o" t="Specify Area" />
          </div>
          <div className="flex items-center h-[30px] mt-[1px] text-[#a8a8a8]">
            <span className="w-[66px] text-right pr-[1px]">X1:</span>
            <AreaField />
            <span className="w-[44px] text-right pr-[1px]">Y1:</span>
            <AreaField />
            <div className="w-[30px] h-[29px] ml-[1px] rounded-[4px] border border-[#c4c4c4] bg-[#dcdcdc] flex items-center justify-center">
              <svg width="22" height="22" viewBox="0 0 22 22">
                <path d="M3 15h17M9 3v16" stroke="#999" fill="none" />
                <rect x="12" y="5" width="5" height="5" fill="#b6c6de" stroke="#8aa" />
                <path d="M5 7h6M15 11v3" stroke="#c88" />
              </svg>
            </div>
          </div>
          <div className="flex items-center h-[30px] text-[#a8a8a8]">
            <span className="w-[66px] text-right pr-[1px]">X2:</span>
            <AreaField />
            <span className="w-[44px] text-right pr-[1px]">Y2:</span>
            <AreaField />
            <div className="w-[30px] h-[29px] ml-[1px] rounded-[4px] border border-[#c4c4c4] bg-[#d4d4d4] flex items-center justify-center">
              <svg width="22" height="22" viewBox="0 0 22 22">
                <rect x="3" y="9" width="8" height="8" fill="#c6d4e8" stroke="#9ab" />
                <circle cx="11" cy="8" r="5" fill="none" stroke="#c8a890" strokeWidth="1.500" />
                <path d="M14 12l6 6" stroke="#8aa0c0" strokeWidth="2.500" />
              </svg>
            </div>
          </div>
          <div className="flex items-center h-[20px] mt-[2px] pl-[41px]">
            <CL st="n" t="Connect to Target Inside The Area Only" dim />
          </div>
          <div className="h-[16px] pl-[9px] leading-[18px]">Power Domain Selection</div>
          <div className="flex items-center h-[22px] mt-[1px] pl-[22px]">
            <Radio on />
            <span className="w-[45px] pl-[8px]">All</span>
            <Radio />
            <span className="pl-[9px]">Selected</span>
          </div>
          <div className="flex items-center h-[22px] pl-[22px]">
            <Radio />
            <span className="w-[73px] pl-[8px]">Named:</span>
            <div className="w-[251px] h-[22px] bg-[#e0e0e0] border-t border-[#aaa] rounded-[2px]" />
          </div>
          <div className="flex items-center h-[24px] pl-[18px]">
            <CL st="o" t="Delete Existing Routes" w={162} />
            <CL st="o" t="Generate Progress Messages" />
          </div>
        </Group>
        <div className="flex ml-[6px] mt-[8px] w-[479px]">
          <div className={`${btn} w-[86px] h-[21px]`}>
            <M t="Mode Setup" />
          </div>
          <div className={`${btn} w-[144px] h-[21px] ml-auto`}>
            <M t="Target Editing Options" />
          </div>
        </div>
      </div>
    </div>
    <div className="h-[36px] shrink-0 border-t border-[#fafafa] flex items-center pl-[38px] gap-[37px]">
      <div className="w-[62px] h-[23px] rounded-[8px] bg-linear-to-b from-[#e00000] to-[#a00000] text-white font-bold flex items-center justify-center shadow-[0_1px_1px_#666]">
        <M t="OK" />
      </div>
      {(["Apply", "Defaults", "Cancel", "Help"] as const).map((b) => (
        <div key={b} className={`${btn} w-[63px] h-[23px]`}>
          <M t={b} />
        </div>
      ))}
    </div>
  </div>
);

// ---------- taskbar ----------
const Win = () => (
  <svg width="22" height="24" viewBox="0 0 22 24">
    <rect x="2" y="2" width="18" height="20" fill="#eef0f6" stroke="#2f3f86" strokeWidth="2.500" strokeDasharray="2 .500" />
  </svg>
);
const tasks: { t: string; w: number; dim?: boolean; active?: boolean; i: React.ReactNode }[] = [
  {
    t: "Pictures",
    w: 228,
    i: (
      <svg width="20" height="24" viewBox="0 0 20 24">
        <rect x="2" y="2" width="16" height="20" rx="1" fill="#5d8fd0" stroke="#3a5f95" />
        <rect x="5" y="6" width="10" height="4" fill="#dfe8f6" />
        <rect x="5" y="14" width="10" height="4" fill="#dfe8f6" />
      </svg>
    ),
  },
  {
    t: "nitrkl05@vlsilab5:PD",
    w: 228,
    i: (
      <svg width="20" height="24" viewBox="0 0 20 24">
        <rect x="1" y="1" width="18" height="22" rx="1" fill="#2b2f2f" stroke="#777" />
        <path d="M4 5l2 2-2 2M7 10h3" stroke="#ddd" fill="none" />
      </svg>
    ),
  },
  { t: "Innovus(TM) Implementation ...", w: 229, i: <Win /> },
  {
    t: "[Chat - Mozilla Firefox]",
    w: 228,
    dim: true,
    i: (
      <svg width="24" height="24" viewBox="0 0 24 24">
        <circle cx="12" cy="12" r="10" fill="#f08a2e" />
        <circle cx="13" cy="11" r="5.500" fill="#4a6fc8" />
        <path d="M3 14c2 7 12 10 18 3-5 3-10 1-11-3z" fill="#f5b62e" />
      </svg>
    ),
  },
  {
    t: "[lock_netlist_dft.v (~/Desktop...",
    w: 228,
    dim: true,
    i: (
      <svg width="22" height="24" viewBox="0 0 22 24">
        <rect x="2" y="3" width="14" height="19" fill="#f6f6f6" stroke="#999" />
        <path d="M4 7h10M4 10h10M4 13h10M4 16h7" stroke="#bbb" />
        <path d="M9 19l2-5 8-11 2 2-8 11z" fill="#e8a65a" />
      </svg>
    ),
  },
  {
    t: "Screenshot from 2025-09-26...",
    w: 227,
    i: (
      <svg width="24" height="24" viewBox="0 0 24 24">
        <path d="M14 15l7 7" stroke="#a87028" strokeWidth="3" />
        <circle cx="10" cy="10" r="8" fill="#eef2f6" stroke="#777" strokeWidth="1.500" />
        <rect x="6" y="6" width="3" height="3" fill="#d94a4a" />
        <rect x="10" y="6" width="3" height="3" fill="#3e9a4a" />
        <rect x="6" y="11" width="3" height="3" fill="#e9b03a" />
      </svg>
    ),
  },
  { t: "SRoute — vlsilab5.nitrkl.ac.in", w: 228, active: true, i: <Win /> },
];

// ---------- page ----------
export default function App() {
  return (
    <div className="w-[1920px] h-[1200px] flex flex-col overflow-hidden bg-[#efefef] text-[12px] text-[#222]" style={{ fontFamily: "'Noto Sans', sans-serif" }}>
      {/* gnome top bar */}
      <div className="h-[28px] shrink-0 flex items-center bg-linear-to-b from-[#f0f0f0] to-[#dcdcdc] border-b border-[#666] text-[13.700px] text-[#333] pl-[9px]">
        <svg width="14" height="16" viewBox="0 0 14 16">
          <circle cx="4" cy="4" r="3" fill="#a0569a" />
          <circle cx="10" cy="4" r="3" fill="#d9a63a" />
          <circle cx="3.500" cy="11" r="3" fill="#6fa04a" />
          <circle cx="10" cy="11" r="3" fill="#c9503a" />
          <circle cx="7" cy="8" r="2" fill="#e8e8e8" />
        </svg>
        <span className="ml-[8px]">Applications</span>
        <span className="ml-[20px]">Places</span>
        <span className="ml-[25px]">Add Stripes — vlsilab5.nitrkl.ac.in</span>
        <div className="ml-auto flex items-center">
          <span>Fri 19:11</span>
          <span className="w-[6px] h-[7px] rounded-full bg-[#333] ml-[3px]" />
          <svg className="ml-[25px]" width="16" height="18" viewBox="0 0 16 18">
            <path d="M5 0h6v5H5zM7 5h2v3h5v3h2v6h-5v-6h1V10H4v1h1v6H0v-6h2V8h5z" fill="#333" />
          </svg>
          <svg className="ml-[9px]" width="16" height="16" viewBox="0 0 16 16">
            <path d="M1 5h3l5-4v14l-5-4H1z" fill="#444" />
            <path d="M11 4c2 2 2 6 0 8M13 2c3 3 3 9 0 12" stroke="#888" fill="none" strokeWidth="1.300" />
          </svg>
          <svg className="ml-[13px] mr-[14px]" width="16" height="16" viewBox="0 0 16 16">
            <path d="M5 3.500a6 6 0 1 0 6 0M8 1v7" stroke="#333" strokeWidth="1.800" fill="none" />
          </svg>
        </div>
      </div>
      {/* title */}
      <div className="h-[37px] shrink-0 bg-[#e8e8e6] border-b border-[#cfcfcf] flex items-center justify-center relative text-[14.500px] text-[#8c8c8c]">
        <span>Innovus(TM) Implementation System 20.14 - /home/nitrkl05/Desktop/Lock/PD/lock_pd.dat - lock — vlsilab5.nitrkl.ac.in</span>
        <div className="absolute right-[14px] top-[15px] flex gap-[27px] items-center text-[#999]">
          <span className="w-[8px] h-[2px] mt-[6px] bg-[#999]" />
          <span className="w-[6px] h-[6px] border-2 border-[#999]" />
          <svg width="8" height="8" viewBox="0 0 8 8">
            <path d="M1 1l6 6M7 1L1 7" stroke="#888" strokeWidth="1.500" />
          </svg>
        </div>
      </div>
      {/* menu */}
      <div className="h-[27px] shrink-0 bg-[#f3f3f3] flex items-center pl-[9px] gap-[12.300px] relative text-[#222]">
        {menus.map(([t, u]) => (
          <M key={t} t={t} u={u} />
        ))}
        <div className="ml-auto flex items-center h-full">
          <div className="w-[109px] h-[24px] bg-[#fafafa] border-l border-t border-[#ccc] flex items-center pl-[2px] text-[#888] gap-[6px]">
            <svg width="14" height="16" viewBox="0 0 14 16">
              <circle cx="6" cy="6" r="4" fill="none" stroke="#999" strokeWidth="1.300" />
              <path d="M8.500 9.500L12 14" stroke="#b07030" strokeWidth="1.800" />
            </svg>
            online help
          </div>
          <span className="ml-[5px] mr-[6px] pt-[3px] font-bold text-[#222] text-[15px] tracking-[1.500px]" style={{ fontFamily: "'Liberation Mono', monospace" }}>
            cādence
          </span>
        </div>
      </div>
      <div className="h-[4px] shrink-0 bg-[#cc0000]" />
      {/* tabs */}
      <div className="h-[29px] shrink-0 bg-[#efefef] flex items-end pl-[1px]">
        <div className="w-[57px] h-[25px] bg-[#f3f3f3] border-t border-l border-[#bbb] border-r flex items-center justify-center">
          <M t="Layout" />
        </div>
        <div className="w-[22px] h-[25px] ml-[1px] rounded-[4px] bg-linear-to-b from-[#f0f0f0] to-[#cfcfcf] border border-[#ccc] flex items-center justify-center">
          <div className="w-[14px] h-[14px] rounded-full bg-[#c64a50] flex items-center justify-center text-white font-bold text-[12px] leading-none">+</div>
        </div>
      </div>
      {/* toolbars */}
      <div className="h-[30px] shrink-0 flex items-center pb-[2px] bg-linear-to-b from-[#f0f0f0] to-[#b6b6b6] border-t border-white">
        <Sp w={2.500} />
        <Handle />
        <T n="folder" />
        <T n="save" />
        <T n="gear" />
        <T n="props" />
        <Handle />
        <T n="undo" />
        <T n="redo" />
        <VSep />
        <T n="selpen" />
        <Tri />
        <T n="xpen" />
        <Tri />
        <T n="xxpen" />
        <T n="curxpen" />
        <Handle />
        <T n="zoomsel" />
        <Tri />
        <T n="zin" />
        <T n="zout" />
        <T n="zfit" />
        <T n="zback" />
        <Tri />
        <T n="zfwd" />
        <T n="refresh" />
        <T n="chip" />
        <Tri />
        <VSep />
        <T n="down" />
        <T n="up" />
        <Handle />
        <T n="layout" />
        <T n="hier" />
        <T n="warn" />
        <T n="info" />
        <T n="xcur" />
        <T n="rstop" />
        <T n="wpen" />
        <Sp w={1} />
        <Handle />
        <Sp w={1} />
        <T n="notes" />
        <T n="pad" />
        <T n="gball" />
      </div>
      <div className="h-[30px] shrink-0 flex items-center pb-[3px] bg-linear-to-b from-[#f0f0f0] to-[#b6b6b6]">
        <Sp w={2} />
        <div className="w-[6px] h-[20px] ml-[2px] mr-[2px] border-x border-[#999]" />
        <div className="w-[27px] h-[27px] border border-black rounded-[4px] bg-[#d8d8d8] relative shrink-0">
          <div className="w-[11px] h-[11px] border-2 border-black absolute left-[3px] top-[3px]" />
          <svg className="absolute left-[11px] top-[11px]" width="12" height="16" viewBox="0 0 12 16">
            <Cur x={1} y={1} />
          </svg>
        </div>
        <div className="w-[9px] h-[27px] ml-[2px] border border-black rounded-[3px] flex items-center justify-center shrink-0">
          <svg width="7" height="5" viewBox="0 0 7 5">
            <path d="M0 0h7L3.500 5z" fill="#c00000" />
          </svg>
        </div>
        <T n="snow" />
        <Tri />
        <T n="copy" />
        <T n="ruler" />
        <Tri />
        {["chart", "pct", "scis", "gridball", "gridball2", "yellball", "bluebar", "blueball", "bluered", "wire", "boxcur", "tray"].map((n) => (
          <T key={n} n={n} />
        ))}
        <Tri />
        <T n="scissor" />
        <Tri />
        <T n="stretch" />
        <Tri />
        <T n="redcur" />
        <T n="step" />
        <T n="redstep" />
        <div className="ml-auto flex items-center pr-[3px]">
          <VSep />
          <div className="w-[27px] h-[27px] border-2 border-[#111] rounded-[4px] flex items-center justify-center shrink-0">
            <Ico n="panelc" s={20} />
          </div>
          <T n="puzzle" />
          <T n="greenbar" />
          <Sp w={1} />
          <VSep />
          <T n="bridge" />
          <div className="-ml-[5px]">
            <Tri />
          </div>
        </div>
      </div>
      {/* centre */}
      <div className="h-[924px] shrink-0 flex relative bg-black">
        <Left />
        <div className="w-[1665px] shrink-0 relative bg-black">
          <Layout />
          <div className="absolute right-[3px] top-[0px] w-[20px] h-[24px] bg-[#eeeeee] grid grid-cols-2 gap-[2px] p-[3px]">
            <span className="bg-[#3a9a4a]" />
            <span className="bg-[#c84a4a]" />
            <span className="bg-[#c84a4a]" />
            <span className="bg-[#3a9a4a]" />
          </div>
        </div>
        <div className="w-[3px] shrink-0 bg-[#999]" />
        <div className="w-[209px] shrink-0 bg-[#efefef] flex flex-col">
          <div className={`${btn} w-[76px] h-[23px] ml-[2px] -mt-[1px] text-[12px]`}>All Colors</div>
          <div className="w-[202px] h-[838px] mt-[1px] ml-[2px] border-l-3 border-t-2 border-[#222] bg-white relative flex flex-col">
            <div className="h-[22px] shrink-0 bg-linear-to-b from-[#dcdcdc] to-[#a8a8a8] flex items-center justify-end pr-[2px] gap-[1px]">
              <span className="w-[15px] h-[15px] rounded-full bg-linear-to-b from-white to-[#ccc] border border-[#aaa] flex items-center justify-center text-[10px]">V</span>
              <span className="w-[15px] h-[15px] rounded-full bg-linear-to-b from-white to-[#ccc] border border-[#aaa] flex items-center justify-center text-[10px]">S</span>
            </div>
            <div className="absolute left-[10px] top-[54px] h-[568px] border-l border-dotted border-[#333]" />
            <div className="absolute left-[30px] top-[70px] h-[161px] border-l border-dotted border-[#333]" />
            <div className="absolute left-[50px] top-[87px] h-[102px] border-l border-dotted border-[#333]" />
            <div className="absolute left-[30px] top-[445px] h-[127px] border-l border-dotted border-[#333]" />
            <div className="bg-[#d4d4d4] border-b-2 border-[#888] h-[34px] shrink-0">
              {rows.slice(0, 2).map((r) => (
                <TreeRow key={r.t} r={r} />
              ))}
            </div>
            <div className="relative -mt-[2px]">
              {rows.slice(2).map((r) => (
                <TreeRow key={r.t} r={r} />
              ))}
            </div>
          </div>
          <div className="flex items-center h-[20px] mt-[4px] ml-[3px] gap-[5px]">
            <Radio on />
            <span>Adaptive</span>
          </div>
          <div className="flex items-center h-[30px] mt-[0px] ml-[3px] relative pt-[10px]">
            <Radio />
            <span className="ml-[5px]">Detail</span>
            <div className="w-[88px] ml-[17px] relative h-[14px]">
              <div className="absolute left-[0px] right-[0px] top-[2px] h-[1px] bg-[#ccc]" />
              <div className="absolute left-[1px] -top-[2px] w-[9px] h-[10px] rounded-[2px] bg-[#f6f6f6] border border-[#ccc] flex items-center justify-center">
                <span className="w-[1px] h-[5px] bg-[#c00000]" />
              </div>
              <span className="absolute left-[24px] top-[9px] h-[5px] w-[1px] bg-[#999]" />
              <span className="absolute left-[43px] top-[9px] h-[5px] w-[1px] bg-[#999]" />
              <span className="absolute left-[62px] top-[9px] h-[5px] w-[1px] bg-[#999]" />
            </div>
            <span className="ml-[5px] text-[#aaa]">Speed</span>
          </div>
        </div>
        <Dialog />
      </div>
      {/* command row */}
      <div className="h-[23px] shrink-0 flex items-center bg-linear-to-b from-[#ececec] to-[#c0c0c0]">
        <div className="w-[5px] h-[18px] ml-[5px] mr-[1px] border-x border-[#999]" />
        <div className={`${btn} w-[98px] h-[23px] rounded-[10px] gap-[26px] pl-[8px]`}>
          select
          <span className="w-0 h-0 border-y-[4px] border-y-transparent border-l-[4px] border-l-[#c00000]" />
        </div>
        <div className={`${btn} w-[100px] h-[23px] ml-[2px] rounded-[10px] gap-[16px] pl-[8px]`}>
          Instance
          <span className="w-0 h-0 border-y-[4px] border-y-transparent border-l-[4px] border-l-[#c00000]" />
        </div>
        <div className="w-[1318px] h-[23px] bg-white pl-[3px] flex items-center text-[#888]">Enter Instance name.</div>
        <div className="flex items-center gap-[5px] w-[175px] pl-[1px] shrink-0">
          <Chk st="x" />
          Append
          <span className="ml-auto mr-[4px]">coords</span>
        </div>
        <div className="w-[76px] h-[23px] bg-white rounded-t-[3px] pl-[3px] flex items-center shrink-0">0, 0</div>
        <span className="ml-[6px] w-[43px] shrink-0">radius</span>
        <div className="w-[40px] h-[23px] bg-white rounded-t-[3px] pl-[3px] flex items-center shrink-0">150</div>
        <div className={`${btn} w-[48px] h-[23px] ml-[2px]`}>Goto</div>
      </div>
      <div className="h-[2px] shrink-0 bg-[#efefef]" />
      {/* status row */}
      <div className="h-[24px] shrink-0 flex items-center bg-white relative">
        <div className="w-[24px] h-[24px] ml-[2px] border border-black flex items-center justify-center font-bold text-[14px] shrink-0 bg-white">Q</div>
        <div className="w-[24px] h-[24px] ml-[4px] border border-[#333] bg-[#eee] flex items-center justify-center shrink-0">
          <svg width="20" height="20" viewBox="0 0 20 20">
            <rect x="2" y="2" width="5" height="5" fill="#d05050" />
            <rect x="2" y="8" width="5" height="4" fill="#6f8fc4" />
            <rect x="2" y="13" width="5" height="5" fill="#e09a3a" />
            <circle cx="13" cy="10" r="5.500" fill="#dfe8f4" stroke="#445" />
            <path d="M13 6.500V10h3" stroke="#333" fill="none" />
          </svg>
        </div>
        <div className="w-[1px] h-[24px] bg-[#888] ml-[4px]" />
        <span className="ml-[5px] pt-[3px] text-[#222]">Click to select single object. Shift+Click to de/select multiple objects.</span>
        <span className="ml-auto mr-[12px] pt-[3px] font-bold text-[#666]">
          43.58600, 3.35700 <span className="text-[#6e9fd8]">Sel: 0</span> <span className="text-[#3fc0c8]">In Memory</span>
        </span>
      </div>
      <div className="h-[1px] shrink-0 bg-[#efefef]" />
      <div className="h-[2px] shrink-0 bg-[#111]" />
      {/* taskbar */}
      <div className="flex-1 flex items-center bg-[#e6e6e6] text-[12.700px] text-[#333] pl-[5px] pt-[2px]">
        <div className="w-[29px] h-[30px] rounded-[3px] border border-[#d0d0d0] flex items-center justify-center shrink-0 bg-[#ececec]">
          <svg width="16" height="16" viewBox="0 0 16 16">
            <rect x="8" y="2" width="6" height="6" fill="none" stroke="#222" strokeWidth="2" />
            <rect x="2" y="9" width="5" height="5" fill="#222" />
            <path d="M4 9V5h3" stroke="#222" fill="none" />
          </svg>
        </div>
        <div className="flex ml-[6px] gap-[6px]">
          {tasks.map((t) => (
            <div
              key={t.t}
              className={`h-[30px] rounded-[3px] border flex items-center pl-[9px] gap-[5px] shrink-0 overflow-hidden whitespace-nowrap ${
                t.active ? "bg-[#c8c8c8] border-[#bbb]" : "bg-[#ececec] border-[#d0d0d0]"
              } ${t.dim ? "text-[#8a8a8a]" : ""}`}
              style={{ width: t.w }}
            >
              {t.i}
              <span>{t.t}</span>
            </div>
          ))}
        </div>
        <div className="flex ml-[12px] gap-[2px]">
          <div className="w-[54px] h-[30px] bg-[#f0f0f0] border border-[#d8d8d8] rounded-[3px] flex items-center justify-end pr-[6px]">
            <span className="w-[15px] h-[22px] border-[3px] border-[#666] bg-white" />
          </div>
          <div className="w-[55px] h-[30px] bg-[#dcdcdc] border border-[#d8d8d8]" />
          <div className="w-[55px] h-[30px] bg-[#dcdcdc] border border-[#d8d8d8]" />
          <div className="w-[54px] h-[30px] bg-[#dcdcdc] border border-[#d8d8d8] rounded-r-[3px]" />
        </div>
      </div>
    </div>
  );
}
